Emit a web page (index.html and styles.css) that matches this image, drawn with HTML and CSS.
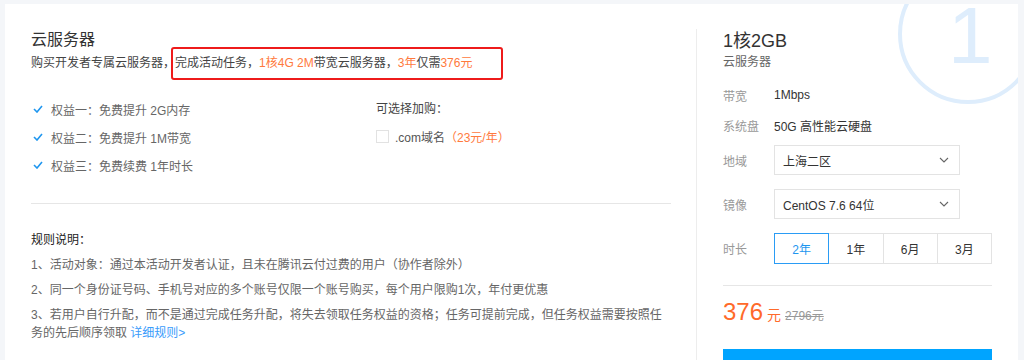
FILE: index.html
```html
<!DOCTYPE html>
<html lang="zh-CN">
<head>
<meta charset="utf-8">
<title>云服务器</title>
<link rel="stylesheet" href="styles.css">
</head>
<body>
<div class="card">
  <div class="mark"><div class="ring"></div><span class="digit">1</span></div>
  <section class="main">
    <h2 class="title">云服务器</h2>
    <p class="sub">购买开发者专属云服务器，<span class="hl">完成活动任务，<em>1核4G 2M</em>带宽云服务器，<em>3年</em>仅需<em>376元</em></span></p>
    <div class="perks">
      <ul class="benefits">
        <li><svg class="check" viewBox="0 0 10 8" width="10" height="8"><polyline points="1,4 4,7 9,1" fill="none" stroke="#1e96ef" stroke-width="1.6"/></svg>权益一：免费提升 2G内存</li>
        <li><svg class="check" viewBox="0 0 10 8" width="10" height="8"><polyline points="1,4 4,7 9,1" fill="none" stroke="#1e96ef" stroke-width="1.6"/></svg>权益二：免费提升 1M带宽</li>
        <li><svg class="check" viewBox="0 0 10 8" width="10" height="8"><polyline points="1,4 4,7 9,1" fill="none" stroke="#1e96ef" stroke-width="1.6"/></svg>权益三：免费续费 1年时长</li>
      </ul>
      <div class="addon">
        <div class="addon-title">可选择加购：</div>
        <div class="addon-item"><span class="box"></span>.com域名<em>（23元/年）</em></div>
      </div>
    </div>
    <div class="divider"></div>
    <div class="rules">
      <h3 class="rules-title">规则说明：</h3>
      <p class="rule">1、活动对象：通过本活动开发者认证，且未在腾讯云付过费的用户（协作者除外）</p>
      <p class="rule">2、同一个身份证号码、手机号对应的多个账号仅限一个账号购买，每个用户限购1次，年付更优惠</p>
      <p class="rule">3、若用户自行升配，而不是通过完成任务升配，将失去领取任务权益的资格；任务可提前完成，但任务权益需要按照任务的先后顺序领取 <a class="more" href="#">详细规则&gt;</a></p>
    </div>
  </section>
  <aside class="side">
    <div class="spec-name">1核2GB</div>
    <div class="spec-sub">云服务器</div>
    <div class="row"><span class="label">带宽</span><span class="value">1Mbps</span></div>
    <div class="row row-tight"><span class="label">系统盘</span><span class="value">50G 高性能云硬盘</span></div>
    <div class="row row-ctl"><span class="label">地域</span>
      <div class="select"><span>上海二区</span><svg class="chev" viewBox="0 0 10 6" width="10" height="6"><polyline points="1,1 5,5 9,1" fill="none" stroke="#666" stroke-width="1.1"/></svg></div>
    </div>
    <div class="row row-ctl"><span class="label">镜像</span>
      <div class="select"><span>CentOS 7.6 64位</span><svg class="chev" viewBox="0 0 10 6" width="10" height="6"><polyline points="1,1 5,5 9,1" fill="none" stroke="#666" stroke-width="1.1"/></svg></div>
    </div>
    <div class="row row-ctl"><span class="label">时长</span>
      <div class="seg">
        <span class="seg-item active">2年</span>
        <span class="seg-item">1年</span>
        <span class="seg-item">6月</span>
        <span class="seg-item">3月</span>
      </div>
    </div>
    <div class="side-divider"></div>
    <div class="price"><span class="num">376</span><span class="unit">元</span><span class="orig">2796元</span></div>
    <button class="buy">立即购买</button>
  </aside>
</div>
</body>
</html>
```

FILE: styles.css
```css
* { box-sizing: border-box; }
html, body { margin: 0; padding: 0; }
body {
  background: #f4f6f9;
  font-family: "Liberation Sans", "Noto Sans CJK SC", sans-serif;
  font-size: 12px;
  color: #333;
  overflow: hidden;
}
.card {
  position: relative;
  overflow: hidden;
  margin: 4px 6px 0 5px;
  background: #fff;
  display: flex;
  padding: 25px 26px 40px 26px;
  min-height: 420px;
}
.mark {
  position: absolute;
  left: 893px;
  top: -40px;
  width: 140px;
  height: 140px;
}
.ring {
  width: 140px;
  height: 140px;
  border: 4px solid #deedfc;
  border-radius: 50%;
}
.digit {
  position: absolute;
  left: 50px;
  top: 32px;
  font-size: 80px;
  line-height: 80px;
  color: #deedfc;
  font-family: "Liberation Sans", sans-serif;
}
.main {
  width: 640px;
  margin-right: 25px;
  position: relative;
}
.title {
  margin: 0;
  font-size: 16px;
  font-weight: normal;
  line-height: 22px;
  color: #333;
}
.sub {
  margin: 2px 0 0;
  line-height: 20px;
  color: #444;
  white-space: nowrap;
}
.sub em { font-style: normal; color: #ff7a3d; }
.hl {
  display: inline-block;
  line-height: 20px;
  border: 2px solid #ee1b1b;
  border-radius: 3px;
  padding: 4px 29px 5px 2px;
  margin: -7px 0 -6px -4px;
}
.perks {
  display: flex;
  margin-top: 21px;
}
.benefits {
  list-style: none;
  margin: 0;
  padding: 0;
  width: 345px;
  color: #666;
}
.benefits li {
  display: flex;
  align-items: center;
  height: 28px;
}
.check { margin: 0 8px 0 2px; flex: none; }
.addon { color: #444; }
.addon-title { line-height: 28px; }
.addon-item {
  display: flex;
  align-items: center;
  height: 26px;
  color: #555;
}
.addon-item em { font-style: normal; color: #ff7a3d; }
.box {
  width: 13px;
  height: 13px;
  border: 1px solid #e2e2e2;
  margin-right: 6px;
}
.divider {
  height: 1px;
  background: #e6e6e6;
  margin-top: 24px;
}
.rules { margin-top: 26px; width: 634px; }
.rules-title {
  margin: 0 0 6px;
  font-size: 12px;
  font-weight: normal;
  line-height: 20px;
  color: #222;
}
.rule {
  margin: 0 0 7px;
  line-height: 18px;
  color: #666;
  word-break: break-all;
}
.more { color: #3a9cfb; text-decoration: none; }
.side {
  flex: none;
  width: 296px;
  border-left: 1px solid #ededed;
  padding-left: 26px;
  position: relative;
}
.spec-name {
  font-size: 18px;
  line-height: 24px;
  color: #333;
}
.spec-sub {
  line-height: 18px;
  color: #666;
}
.row {
  display: flex;
  align-items: center;
  height: 20px;
  margin-top: 14px;
}
.row-tight { margin-top: 10px; }
.row-ctl { height: 30px; margin-top: 10px; }
.row-ctl + .row-ctl { margin-top: 14px; }
.label {
  width: 51px;
  flex: none;
  color: #999;
}
.value { color: #333; }
.select {
  width: 186px;
  height: 30px;
  border: 1px solid #e3e3e3;
  display: flex;
  align-items: center;
  justify-content: space-between;
  padding: 0 10px 0 8px;
  color: #333;
}
.seg {
  display: flex;
  width: 218px;
  height: 31px;
}
.seg-item {
  flex: 1;
  display: flex;
  align-items: center;
  justify-content: center;
  border: 1px solid #e3e3e3;
  margin-left: -1px;
  color: #333;
}
.seg-item:first-child { margin-left: 0; }
.seg-item.active {
  border-color: #2a9cf5;
  color: #1e96ef;
  position: relative;
  z-index: 1;
}
.side-divider {
  width: 269px;
  height: 1px;
  background: #e6e6e6;
  margin-top: 22px;
}
.price {
  margin-top: 10px;
  line-height: 32px;
  white-space: nowrap;
}
.num { font-size: 24px; color: #ff6a2a; }
.unit { font-size: 14px; color: #ff6a2a; margin-left: 4px; }
.orig { color: #999; text-decoration: line-through; margin-left: 4px; }
.buy {
  display: block;
  margin-top: 17px;
  width: 269px;
  height: 40px;
  border: 0;
  background: #00a4ff;
  color: #fff;
  font-family: inherit;
  font-size: 14px;
}
```
